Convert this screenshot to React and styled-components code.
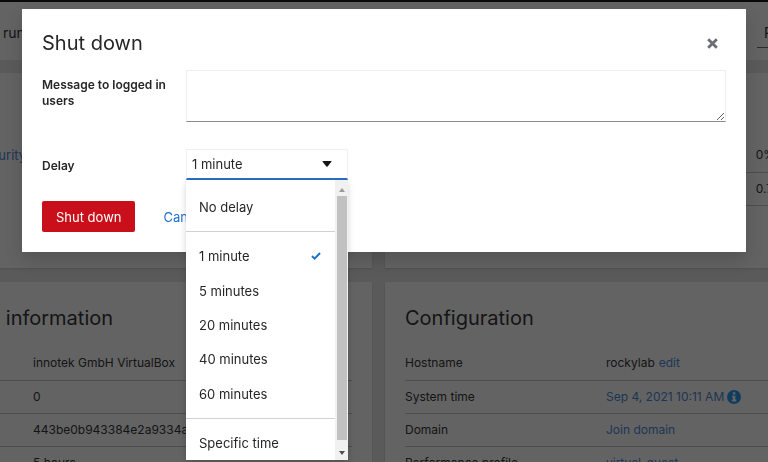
import React, { useState } from "react";
import styled, { createGlobalStyle } from "styled-components";

const Global = createGlobalStyle`
  *, *::before, *::after { box-sizing: border-box; }
  html, body, #root { height: 100%; }
  body {
    margin: 0;
    overflow: hidden;
    background: #e8e8e8;
    color: #262626;
    font-family: Inter, "Open Sans", sans-serif;
    font-size: 12px;
    line-height: 16px;
  }
  button, select, textarea { font: inherit; color: inherit; }
  h1, h2, ul { margin: 0; padding: 0; font-weight: 400; list-style: none; }
`;

const Page = styled.div`
  height: 100%;
  overflow: hidden;
  color: #333;
`;

const Masthead = styled.header`
  height: 2px;
  background: #151515;
`;

const Toolbar = styled.div`
  display: flex;
  align-items: center;
  justify-content: space-between;
  height: 58px;
  margin-right: -80px;
  padding: 4px 0 0 3px;
  background: #fff;
  font-size: 14px;
`;

const PowerButton = styled.button`
  width: 91px;
  height: 30px;
  padding: 0 7px;
  border: 0;
  border-bottom: 1px solid #6a6e73;
  background: #fff;
  text-align: left;
`;

const Cards = styled.main`
  display: grid;
  grid-template-columns: 1fr 1fr;
  grid-template-rows: 195px auto;
  gap: 14px 13px;
  margin: 13px -79px 0 -90px;
`;

const Card = styled.section`
  padding: 20px;
  background: #fff;
  box-shadow: 0 1px 2px rgba(3, 3, 3, 0.12);
`;

const CardTitle = styled.h2`
  margin: 4px 0 17px;
  font-size: 20px;
  line-height: 24px;
`;

const Table = styled.table`
  width: 100%;
  border-collapse: collapse;

  th, td {
    height: 33px;
    padding: 0;
    border-bottom: 1px solid #c4c6c8;
    font-weight: 400;
    text-align: left;
    white-space: nowrap;
  }
  th { width: ${(p) => p.$label}px; }
`;

const Link = styled.a`
  color: #4a8ad8;
  text-decoration: none;
`;

const EditLink = styled(Link)`
  margin-left: 4px;
`;

const InfoIcon = styled.svg`
  width: 14px;
  height: 14px;
  margin-left: 3px;
  vertical-align: -3px;
`;

const HealthList = styled.ul`
  padding: 54px 0 0 45px;
  font-size: 13px;
`;

const Usage = styled(Table)`
  margin-top: 46px;
  td { padding-left: 10px; }
`;

const Backdrop = styled.div`
  position: fixed;
  inset: 0;
  padding: 9px 22px;
  background: rgba(3, 3, 3, 0.62);
`;

const Dialog = styled.div`
  padding: 20px;
  background: #fff;
  box-shadow: 0 8px 16px rgba(3, 3, 3, 0.16);
`;

const DialogHeader = styled.header`
  display: flex;
  align-items: center;
  justify-content: space-between;
  height: 28px;
  margin-bottom: 13px;
`;

const DialogTitle = styled.h1`
  font-size: 20px;
  line-height: 28px;
`;

const CloseButton = styled.button`
  display: flex;
  padding: 8px;
  border: 0;
  background: none;
  color: #6a6e73;
`;

const Form = styled.form`
  display: grid;
  grid-template-columns: 144px 1fr;
  row-gap: 27px;
`;

const Label = styled.label`
  padding-top: ${(p) => (p.$single ? 9 : 7)}px;
  padding-right: 12px;
  font-weight: 600;
`;

const Message = styled.textarea`
  display: block;
  width: 100%;
  height: 52px;
  padding: 6px;
  border: 1px solid #ededed;
  border-bottom-color: #8a8d90;
  outline: 0;
  resize: vertical;
`;

const SelectBox = styled.div`
  position: relative;
  width: 162px;
  height: 31px;
`;

const Toggle = styled.select`
  width: 100%;
  height: 31px;
  padding: 0 5px;
  appearance: none;
  border: 1px solid #f0f0f0;
  border-bottom: 2px solid #2b6fc9;
  border-radius: 0;
  outline: 0;
  background: #fff;
  font-size: 13px;
`;

const Caret = styled.svg`
  position: absolute;
  top: 12px;
  right: 16px;
  width: 10px;
  height: 6px;
  pointer-events: none;
`;

const Menu = styled.div`
  position: absolute;
  top: 100%;
  left: 0;
  display: flex;
  width: 162px;
  height: 280px;
  background: #fff;
  box-shadow: 0 4px 8px rgba(3, 3, 3, 0.12), 0 0 4px rgba(3, 3, 3, 0.06);
`;

const Options = styled.ul`
  display: flex;
  flex: 1;
  flex-direction: column;
  padding-top: 10px;
`;

const Option = styled.li`
  display: flex;
  flex: 1;
  align-items: center;
  justify-content: space-between;
  padding: 0 14px 0 13px;
  font-size: 13px;
  cursor: pointer;
`;

const Divider = styled.li`
  height: 1px;
  margin: 7px 0;
  background: #d2d2d2;
`;

const ScrollTrack = styled.div`
  display: flex;
  flex-direction: column;
  align-items: center;
  width: 13px;
  padding: 8px 1px 5px;
  background: #f1f1f1;
`;

const ScrollThumb = styled.div`
  flex: 1;
  width: 10px;
  margin: 4px 0 11px;
  background: #c1c1c1;
`;

const ScrollArrow = styled.svg`
  width: 6px;
  height: 4px;
`;

const Actions = styled.footer`
  display: flex;
  gap: 12px;
  margin-top: 21px;
`;

const Action = styled.button`
  height: 31px;
  padding: 0 ${(p) => (p.$danger ? 14 : 16)}px;
  border: 0;
  border-radius: 2px;
  background: ${(p) => (p.$danger ? "#c9101a" : "none")};
  color: ${(p) => (p.$danger ? "#fff" : "#1f6fd0")};
  font-size: 13px;
`;

const choices = ["No delay", null, "1 minute", "5 minutes", "20 minutes", "40 minutes", "60 minutes", null, "Specific time"];

function DelaySelect() {
  const [delay, setDelay] = useState("1 minute");
  return (
    <SelectBox>
      <Toggle id="delay" value={delay} onChange={(e) => setDelay(e.target.value)}>
        {choices.filter(Boolean).map((c) => <option key={c}>{c}</option>)}
      </Toggle>
      <Caret viewBox="0 0 10 6"><path d="M1 0h8q1 0 .4.8L5.6 5.4q-.6.6-1.2 0L.6.8Q0 0 1 0z" fill="#151515" /></Caret>
      <Menu>
        <Options role="listbox" aria-label="Delay">
          {choices.map((c, i) =>
            c ? (
              <Option key={c} role="option" aria-selected={c === delay} onClick={() => setDelay(c)}>
                {c}
                {c === delay && (
                  <svg width="10" height="8" viewBox="0 0 10 8" fill="none" stroke="#1a73cc" strokeWidth="2">
                    <path d="M1 4l2.6 2.6L9 1" />
                  </svg>
                )}
              </Option>
            ) : (
              <Divider key={i} role="separator" />
            )
          )}
        </Options>
        <ScrollTrack aria-hidden="true">
          <ScrollArrow viewBox="0 0 6 4"><path d="M0 4L3 0l3 4z" fill="#9a9a9a" /></ScrollArrow>
          <ScrollThumb />
          <ScrollArrow viewBox="0 0 6 4"><path d="M0 0h6L3 4z" fill="#505050" /></ScrollArrow>
        </ScrollTrack>
      </Menu>
    </SelectBox>
  );
}

export default function App() {
  return (
    <>
      <Global />
      <Page>
        <Masthead />
        <Toolbar>
          <span>running</span>
          <PowerButton type="button">Reboot</PowerButton>
        </Toolbar>
        <Cards>
          <Card>
            <HealthList>
              <li><Link href="#updates">Security</Link></li>
            </HealthList>
          </Card>
          <Card>
            <Usage $label={342}>
              <tbody>
                <tr><th scope="row">CPU</th><td>0% of 1 CPU</td></tr>
                <tr><th scope="row">Memory</th><td>0.7 / 1.8 GiB</td></tr>
              </tbody>
            </Usage>
          </Card>
          <Card>
            <CardTitle>System information</CardTitle>
            <Table $label={103}>
              <tbody>
                <tr><th scope="row">Model</th><td>innotek GmbH VirtualBox</td></tr>
                <tr><th scope="row">Asset tag</th><td>0</td></tr>
                <tr><th scope="row">Machine ID</th><td>443be0b943384e2a9334ae</td></tr>
                <tr><th scope="row">Uptime</th><td>5 hours</td></tr>
              </tbody>
            </Table>
          </Card>
          <Card>
            <CardTitle>Configuration</CardTitle>
            <Table $label={201}>
              <tbody>
                <tr>
                  <th scope="row">Hostname</th>
                  <td>rockylab<EditLink href="#hostname">edit</EditLink></td>
                </tr>
                <tr>
                  <th scope="row">System time</th>
                  <td>
                    <Link href="#time">Sep 4, 2021 10:11 AM</Link>
                    <InfoIcon viewBox="0 0 14 14">
                      <circle cx="7" cy="7" r="7" fill="#2b9af3" />
                      <path d="M5.8 2.3h2.5v2.2H5.8zM5 5.7h3.4v4.1h.9v1.6H4.9V9.8h.9V7.3H5z" fill="#fff" />
                    </InfoIcon>
                  </td>
                </tr>
                <tr><th scope="row">Domain</th><td><Link href="#domain">Join domain</Link></td></tr>
                <tr><th scope="row">Performance profile</th><td><Link href="#profile">virtual-guest</Link></td></tr>
              </tbody>
            </Table>
          </Card>
        </Cards>
      </Page>
      <Backdrop>
        <Dialog role="dialog" aria-modal="true" aria-labelledby="dialog-title">
          <DialogHeader>
            <DialogTitle id="dialog-title">Shut down</DialogTitle>
            <CloseButton type="button" aria-label="Close">
              <svg width="11" height="11" viewBox="0 0 11 11" stroke="currentColor" strokeWidth="2.8">
                <path d="M1.2 1.2l8.6 8.6M9.8 1.2L1.2 9.8" />
              </svg>
            </CloseButton>
          </DialogHeader>
          <Form>
            <Label htmlFor="message">Message to logged in users</Label>
            <Message id="message" />
            <Label htmlFor="delay" $single>Delay</Label>
            <DelaySelect />
          </Form>
          <Actions>
            <Action type="button" $danger>Shut down</Action>
            <Action type="button">Cancel</Action>
          </Actions>
        </Dialog>
      </Backdrop>
    </>
  );
}
